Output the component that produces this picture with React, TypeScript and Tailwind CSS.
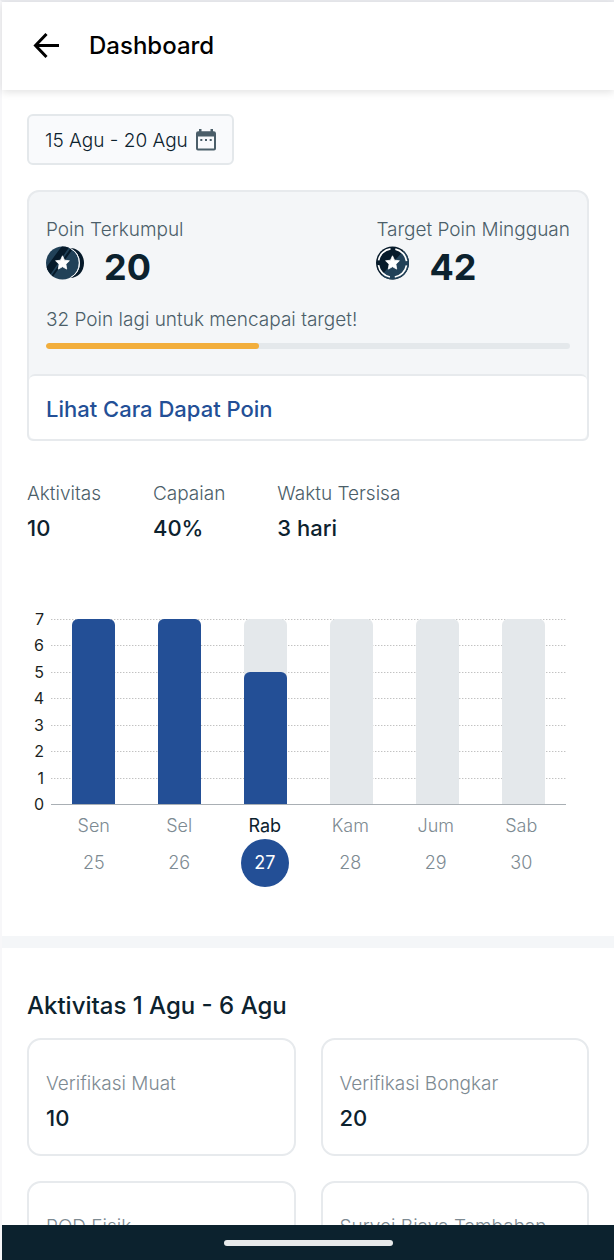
type Day = { name: string; date: number; value: number; active?: boolean };

const MAX = 7;
const TICKS = [7, 6, 5, 4, 3, 2, 1, 0];

const DAYS: Day[] = [
  { name: "Sen", date: 25, value: 7 },
  { name: "Sel", date: 26, value: 7 },
  { name: "Rab", date: 27, value: 5, active: true },
  { name: "Kam", date: 28, value: 0 },
  { name: "Jum", date: 29, value: 0 },
  { name: "Sab", date: 30, value: 0 },
];

const STATS = [
  { label: "Aktivitas", value: "10" },
  { label: "Capaian", value: "40%" },
  { label: "Waktu Tersisa", value: "3 hari" },
];

const ACTIVITIES = [
  { label: "Verifikasi Muat", value: 10 },
  { label: "Verifikasi Bongkar", value: 20 },
  { label: "POD Fisik", value: 10 },
  { label: "Survei Biaya Tambahan", value: 10 },
];

const STAR =
  "M16.5 9.8l2 4.400 4.900.6-3.500 3.400.8 4.900-4.200-2.400-4.200 2.400.8-4.900-3.500-3.400 4.900-.6z";

function BackArrow() {
  return (
    <svg className="h-7 w-7" viewBox="0 0 28 28" fill="none" stroke="#000" strokeWidth="3" aria-hidden="true">
      <path d="M28 13.500H5M15.500 2 4.500 13.500l11 11.500" />
    </svg>
  );
}

function CalendarIcon() {
  return (
    <svg className="mb-1 h-[22px] w-5" viewBox="0 0 20 22" aria-hidden="true">
      <path
        fill="#4b5e69"
        fillRule="evenodd"
        d="M3 0h2.500v2.200h9V0H17v2.200h.8A2.200 2.200 0 0 1 20 4.400v15a2 2 0 0 1-2 2H2a2 2 0 0 1-2-2v-15a2.200 2.200 0 0 1 2.200-2.200H3zM2 7.500v11.900h16V7.500z"
      />
      <path fill="#4b5e69" d="M4.300 10h2v2h-2zM9 10h2v2H9zM13.700 10h2v2h-2z" />
    </svg>
  );
}

function CoinStack() {
  return (
    <svg className="h-[34px] w-[38px]" viewBox="0 0 38 34" aria-hidden="true">
      <defs>
        <clipPath id="coin-face">
          <circle cx="16.500" cy="17" r="16.500" />
        </clipPath>
      </defs>
      <path fill="#061a2a" d="M24 2c8 0 14 6.500 14 15s-6 15-14 15z" />
      <circle cx="17.800" cy="17" r="16.200" fill="#f4f6f8" />
      <circle cx="16.500" cy="17" r="16.500" fill="#214158" />
      <g clipPath="url(#coin-face)" fill="#061a2a">
        <path d="M16 0h8L4 29l-5-6zM25.500 1l2 1L6 32l-1.500-1z" />
      </g>
      <path d="M24.500 2.500a16.400 16.400 0 0 1 0 29" fill="none" stroke="#f4f6f8" strokeWidth="1" />
      <path d={STAR} fill="#fff" stroke="#fff" strokeWidth="0.800" strokeLinejoin="round" />
    </svg>
  );
}

function TargetCoin() {
  return (
    <svg className="h-[34px] w-[33px]" viewBox="0 0 33 34" aria-hidden="true">
      <circle cx="16.500" cy="17" r="16.500" fill="#061a2a" />
      <path d="M27.500 4.700A16.500 16.500 0 0 1 5.500 29.300z" fill="#214158" />
      <circle
        cx="16.500"
        cy="17"
        r="14.200"
        fill="none"
        stroke="#fff"
        strokeWidth="1.700"
        strokeDasharray="17.300 5"
        strokeDashoffset="-2.500"
      />
      <path d={STAR} fill="#fff" stroke="#fff" strokeWidth="0.800" strokeLinejoin="round" />
    </svg>
  );
}

function WeekChart() {
  return (
    <div className="mt-[77px] flex pr-[23px]">
      <div className="-my-[10px] flex h-[205px] w-6 shrink-0 flex-col justify-between pr-[7px] text-right text-base leading-5 text-[#1c1f22]">
        {TICKS.map((tick) => (
          <span key={tick}>{tick}</span>
        ))}
      </div>
      <div className="grow">
        <div className="relative h-[186px]">
          <div className="absolute inset-0 flex flex-col justify-between">
            {TICKS.map((tick) => (
              <div
                key={tick}
                className={
                  tick === 0
                    ? "h-px bg-[#a9afb4]"
                    : "h-px bg-[repeating-linear-gradient(90deg,#c2c2c2_0_1px,#e6e6e6_1px_2px,#ffffff_2px_3px)]"
                }
              />
            ))}
          </div>
          <div className="relative grid h-full grid-cols-6 pb-px">
            {DAYS.map((day) => (
              <div
                key={day.name}
                className={
                  "mx-auto flex h-full w-1/2 items-end rounded-t-md " +
                  (day.value < MAX ? "bg-[#e4e8eb]" : "")
                }
              >
                <div
                  className="w-full rounded-t-md bg-[#234f96]"
                  style={{ height: `${(day.value / MAX) * 100}%` }}
                />
              </div>
            ))}
          </div>
        </div>
        <div className="mt-2 grid grid-cols-6 pr-0.5 text-lg font-light text-[#7d8a92]">
          {DAYS.map((day) => (
            <div key={day.name} className="flex flex-col items-center">
              <span className={day.active ? "leading-[26px] font-normal text-[#0c222e]" : "leading-[26px]"}>
                {day.name}
              </span>
              <span
                className={
                  "flex h-12 w-12 items-center justify-center rounded-full " +
                  (day.active ? "bg-[#234f96] font-normal text-white" : "")
                }
              >
                {day.date}
              </span>
            </div>
          ))}
        </div>
      </div>
    </div>
  );
}

export default function App() {
  return (
    <div className="flex h-screen flex-col border-t-2 border-l-2 border-t-[#ebecf0] border-l-[#f7f7f9] bg-white font-['Inter',sans-serif] text-[#0c222e]">
      <header className="z-10 flex h-[88px] shrink-0 items-center gap-[30px] bg-white px-[29px] shadow-[0_2px_8px_rgba(0,0,0,0.12)]">
        <button type="button" aria-label="Kembali">
          <BackArrow />
        </button>
        <h1 className="text-2xl font-medium text-black">Dashboard</h1>
      </header>

      <main className="min-h-0 grow overflow-y-auto [scrollbar-width:none]">
        <section className="px-[25px] pt-6 pb-[49px]">
          <button
            type="button"
            className="flex h-[51px] items-center gap-2 rounded-md border-2 border-[#e4e8eb] bg-[#f9fafc] px-4 pt-1 text-[19px] font-light"
          >
            15 Agu - 20 Agu
            <CalendarIcon />
          </button>

          <div className="mt-[25px] rounded-t-xl rounded-b-md border-2 border-[#e7eaed] bg-[#f4f6f8]">
            <div className="px-[17px] pt-[26px] pb-[25px]">
              <div className="flex justify-between text-[#4b5e69]">
                <div>
                  <p className="text-[19px] leading-6 font-light">Poin Terkumpul</p>
                  <div className="mt-1 flex items-start gap-5">
                    <CoinStack />
                    <span className="text-4xl leading-[42px] font-bold text-[#0c222e]">20</span>
                  </div>
                </div>
                <div>
                  <p className="text-[19px] leading-6 font-light">Target Poin Mingguan</p>
                  <div className="mt-1 flex items-start gap-5">
                    <TargetCoin />
                    <span className="text-4xl leading-[42px] font-bold text-[#0c222e]">42</span>
                  </div>
                </div>
              </div>
              <p className="mt-5 text-[19px] leading-6 font-light text-[#4b5e69]">
                32 Poin lagi untuk mencapai target!
              </p>
              <div className="mt-[11px] h-[6px] overflow-hidden rounded-full bg-[#e4e8eb]">
                <div className="h-full rounded-full bg-[#f2ae3c]" style={{ width: "40.700%" }} />
              </div>
            </div>
            <a
              href="#cara"
              className="flex h-[65px] items-center rounded-md border-t-2 border-[#e7eaed] bg-white px-[17px] pt-1 text-[22px] font-medium text-[#234f96]"
            >
              Lihat Cara Dapat Poin
            </a>
          </div>

          <dl className="mt-[41px] flex gap-[52px]">
            {STATS.map((stat) => (
              <div key={stat.label}>
                <dt className="text-[19px] leading-6 font-light text-[#4b5e69]">{stat.label}</dt>
                <dd className="mt-2 text-[22px] leading-7 font-medium">{stat.value}</dd>
              </div>
            ))}
          </dl>

          <WeekChart />
        </section>

        <div className="h-3 bg-[#f4f6f8]" />

        <section className="px-[25px] pt-10 pb-6">
          <h2 className="text-2xl leading-9 font-medium">Aktivitas 1 Agu - 6 Agu</h2>
          <div className="mt-[14px] grid grid-cols-2 gap-[25px]">
            {ACTIVITIES.map((item) => (
              <div key={item.label} className="h-[118px] rounded-[14px] border-2 border-[#e7eaed] px-[17px] pt-8">
                <p className="text-[19px] leading-6 font-light whitespace-nowrap text-[#7d8a92]">{item.label}</p>
                <p className="mt-2 text-[22px] leading-7 font-medium">{item.value}</p>
              </div>
            ))}
          </div>
        </section>
      </main>

      <footer className="flex h-[35px] shrink-0 items-center justify-center bg-[#0c222e]">
        <div className="h-[6px] w-[169px] rounded-full bg-[#e8eaeb]" />
      </footer>
    </div>
  );
}
